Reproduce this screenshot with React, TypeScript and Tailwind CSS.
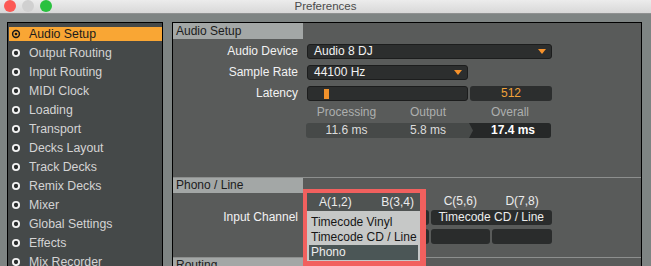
import React from "react";

const items = [
  "Audio Setup",
  "Output Routing",
  "Input Routing",
  "MIDI Clock",
  "Loading",
  "Transport",
  "Decks Layout",
  "Track Decks",
  "Remix Decks",
  "Mixer",
  "Global Settings",
  "Effects",
  "Mix Recorder",
];

function Bullet({ active }: { active?: boolean }) {
  return (
    <svg width="10" height="10" viewBox="0 0 10 10" className="shrink-0">
      {active ? (
        <>
          <circle cx="5" cy="5" r="3.4" fill="none" stroke="#1a1a1a" strokeWidth="1.5" />
          <circle cx="5" cy="5" r="1.3" fill="#1a1a1a" />
        </>
      ) : (
        <circle cx="5" cy="5" r="3.1" fill="#2a2d2d" stroke="#f2f2f2" strokeWidth="1.9" />
      )}
    </svg>
  );
}

function Triangle() {
  return (
    <svg width="8" height="5" viewBox="0 0 8 5" className="shrink-0">
      <polygon points="0,0 8,0 4,5" fill="#f7922b" />
    </svg>
  );
}

function SectionHeader({ title, tall }: { title: string; tall?: boolean }) {
  return (
    <div
      className={
        tall
          ? "h-[16px] w-[130px] shrink-0 bg-[#a3a7a6] pl-[3px] text-[12px] leading-[16px] text-[#1c1c1c]"
          : "h-[15px] w-[130px] shrink-0 bg-[#a3a7a6] pl-[3px] text-[12px] leading-[15px] text-[#1c1c1c]"
      }
    >
      {title}
    </div>
  );
}

function Row({ label, children }: { label: string; children: React.ReactNode }) {
  return (
    <div className="flex h-[15px] items-center">
      <div className="w-[125px] shrink-0 text-right text-[12px] leading-[15px] text-[#f2f2f2]">{label}</div>
      <div className="ml-[9px] flex h-full items-center gap-[2px]">{children}</div>
    </div>
  );
}

export default function App() {
  return (
    <div className="relative h-[266px] w-[651px] overflow-hidden bg-[#7e8483] font-['Liberation_Sans','Arial',sans-serif]">
      {/* title bar */}
      <div className="grid h-[14px] grid-cols-[1fr_auto_1fr] items-center border-b border-[#8f9191] bg-gradient-to-b from-[#ececec] to-[#d8d8d8]">
        <div className="-mt-[2px] flex gap-[6px] pl-[4px]">
          <div className="h-[12px] w-[12px] rounded-full bg-[#fc5a55]" />
          <div className="h-[12px] w-[12px] rounded-full bg-[#d0d0d0]" />
          <div className="h-[12px] w-[12px] rounded-full bg-[#2ac13f]" />
        </div>
        <div className="-mt-[2px] text-[11.5px] leading-[12px] text-[#4a4a4a]">Preferences</div>
        <div />
      </div>

      <div className="flex pl-[7px] pt-[8px]">
        {/* sidebar */}
        <div className="h-[260px] w-[156px] shrink-0 border border-black bg-[#454949] pt-[4px]">
          <div className="flex flex-col gap-[5px]">
            {items.map((it, i) => (
              <div
                key={it}
                className={
                  i === 0
                    ? "ml-[1px] flex h-[14px] items-center bg-[#f9a634] pl-[2px] text-[#1c1c1c]"
                    : "ml-[1px] flex h-[14px] items-center pl-[2px] text-[#d4d4d4]"
                }
              >
                <Bullet active={i === 0} />
                <span className="ml-[8px] text-[12.3px] leading-[14px]">{it}</span>
              </div>
            ))}
          </div>
        </div>

        {/* main panel */}
        <div className="ml-[9px] flex h-[260px] w-[470px] shrink-0 flex-col border border-black bg-[#595b5a]">
          <SectionHeader title="Audio Setup" tall />
          <div className="mt-[5px] flex flex-col gap-[6px]">
            <Row label="Audio Device">
              <div className="flex h-[15px] w-[245px] items-center justify-between rounded-[3px] border border-[#1c1d1d] bg-[#2c2e2e] pl-[6px] pr-[5px]">
                <span className="text-[12px] leading-[13px] text-[#f2f2f2]">Audio 8 DJ</span>
                <Triangle />
              </div>
            </Row>
            <Row label="Sample Rate">
              <div className="flex h-[15px] w-[161px] items-center justify-between rounded-[3px] border border-[#1c1d1d] bg-[#2c2e2e] pl-[6px] pr-[5px]">
                <span className="text-[12px] leading-[13px] text-[#f2f2f2]">44100 Hz</span>
                <Triangle />
              </div>
            </Row>
            <Row label="Latency">
              <div className="flex h-[15px] w-[161px] items-center rounded-[3px] border border-[#1c1d1d] bg-[#2c2e2e]">
                <div className="ml-[16px] h-[10px] w-[5px] bg-[#f0912b]" />
              </div>
              <div className="flex h-[15px] w-[82px] items-center justify-center rounded-[3px] bg-[#2c2e2e] text-[12px] leading-[13px] text-[#f0a23a]">
                512
              </div>
            </Row>
          </div>

          <div className="ml-[133px] mt-[4px] flex h-[14px] w-[245px] text-[12px] leading-[14px] text-[#adafae]">
            <div className="w-[81px] text-center">Processing</div>
            <div className="w-[82px] text-center">Output</div>
            <div className="flex-1 text-center">Overall</div>
          </div>
          <div className="ml-[133px] mt-[4px] flex h-[15px] w-[245px] overflow-hidden rounded-[3px] bg-[#464948] text-[12px] leading-[15px]">
            <div className="w-[81px] text-center text-[#dcdcdc]">11.6 ms</div>
            <div className="w-[82px] text-center text-[#dcdcdc]">5.8 ms</div>
            <div className="flex-1 bg-[#262828] pl-[6px] text-center font-bold text-white [clip-path:polygon(0_0,100%_0,100%_100%,0_100%,4px_50%)]">
              17.4 ms
            </div>
          </div>

          <div className="mt-[39px] h-[1px] shrink-0 bg-[#8d8f8e]" />
          <SectionHeader title="Phono / Line" />
          <div className="ml-[134px] grid h-[17px] w-[245px] grid-cols-4 gap-x-[2px] text-[12px] leading-[17px] text-[#ececec]">
            <div className="invisible text-center">A(1,2)</div>
            <div className="invisible text-center">B(3,4)</div>
            <div className="text-center">C(5,6)</div>
            <div className="text-center">D(7,8)</div>
          </div>
          <div className="flex h-[15px] items-center">
            <div className="w-[125px] shrink-0 text-right text-[12px] leading-[15px] text-[#f2f2f2]">Input Channel</div>
            <div className="ml-[9px] grid h-[15px] w-[245px] grid-cols-4 gap-x-[2px]">
              <div className="rounded-[3px] bg-[#2a2c2c]" />
              <div className="rounded-[3px] bg-[#2a2c2c]" />
              <div className="col-span-2 rounded-[3px] bg-[#2a2c2c] text-center text-[12px] leading-[15px] text-[#ececec]">
                Timecode CD / Line
              </div>
            </div>
          </div>
          <div className="ml-[134px] mt-[4px] grid h-[15px] w-[245px] grid-cols-4 gap-x-[2px]">
            <div className="rounded-[3px] bg-[#2a2c2c]" />
            <div className="rounded-[3px] bg-[#2a2c2c]" />
            <div className="rounded-[3px] bg-[#2a2c2c]" />
            <div className="rounded-[3px] bg-[#2a2c2c]" />
          </div>

          <div className="mt-[13px] h-[1px] shrink-0 bg-[#8d8f8e]" />
          <SectionHeader title="Routing" />
        </div>
      </div>

      {/* open dropdown with highlight annotation */}
      <div className="absolute left-[303px] top-[189px] bg-[#f1605e] pb-[5px] pl-[4px] pr-[6px] pt-[4px]">
        <div className="w-[113px]">
          <div className="flex h-[18px] items-center justify-between bg-[#4f5352] pl-[12px] pr-[6px] text-[12px] leading-[18px] text-[#ececec]">
            <span>A(1,2)</span>
            <span>B(3,4)</span>
          </div>
          <div className="bg-[#c6c8c7] px-[2px] pb-[1px] pt-[4px] text-[12px] leading-[15px]">
            <div className="h-[15px] pl-[2px] text-[#161616]">Timecode Vinyl</div>
            <div className="h-[15px] pl-[2px] text-[#161616]">Timecode CD / Line</div>
            <div className="h-[15px] bg-[#4b5656] pl-[2px] text-[#ededed]">Phono</div>
          </div>
        </div>
      </div>
    </div>
  );
}
